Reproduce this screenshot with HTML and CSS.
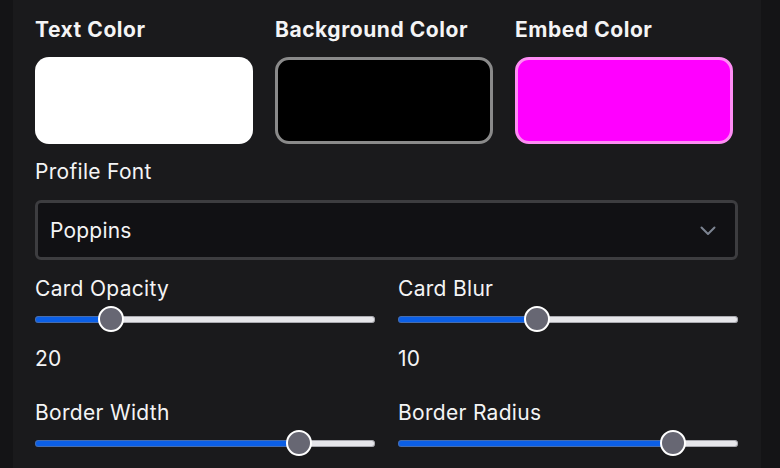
FILE: index.html
```html
<!DOCTYPE html>
<html lang="en">
<head>
<meta charset="utf-8">
<title>Profile Appearance</title>
<link rel="stylesheet" href="styles.css">
</head>
<body>
<div class="panel">
  <div class="colors">
    <div class="color-field">
      <div class="label-bold">Text Color</div>
      <div class="swatch swatch-white"></div>
    </div>
    <div class="color-field">
      <div class="label-bold">Background Color</div>
      <div class="swatch swatch-black"></div>
    </div>
    <div class="color-field">
      <div class="label-bold">Embed Color</div>
      <div class="swatch swatch-pink"></div>
    </div>
  </div>

  <div class="field">
    <div class="label">Profile Font</div>
    <div class="select">
      <span>Poppins</span>
      <svg class="chevron" width="16" height="10" viewBox="0 0 16 10"><polyline points="1.5,1.5 8,8 14.5,1.5" fill="none" stroke="#7c8492" stroke-width="2" stroke-linecap="round" stroke-linejoin="round"/></svg>
    </div>
  </div>

  <div class="sliders">
    <div class="slider-field">
      <div class="label">Card Opacity</div>
      <input class="range" type="range" min="0" max="100" value="20" style="--v:0.2">
      <div class="value">20</div>
    </div>
    <div class="slider-field">
      <div class="label">Card Blur</div>
      <input class="range" type="range" min="0" max="25" value="10" style="--v:0.4">
      <div class="value">10</div>
    </div>
    <div class="slider-field">
      <div class="label">Border Width</div>
      <input class="range" type="range" min="0" max="10" value="8" style="--v:0.8">
    </div>
    <div class="slider-field">
      <div class="label">Border Radius</div>
      <input class="range" type="range" min="0" max="30" value="25" style="--v:0.8333">
    </div>
  </div>
</div>
</body>
</html>
```

FILE: styles.css
```css
* { box-sizing: border-box; }

html, body {
  margin: 0;
  padding: 0;
  background: #141416;
  height: 100%;
  overflow: hidden;
}

body {
  font-family: Inter, "Liberation Sans", sans-serif;
  color: #f4f4f5;
}

.panel {
  margin: 0 19px 0 13px;
  background: #1a1a1c;
  min-height: 100%;
  padding: 18px 23px 0 22px;
}

.colors {
  display: flex;
  gap: 22px;
}

.color-field {
  width: 218px;
  display: flex;
  flex-direction: column;
  gap: 15px;
}

.label-bold {
  font-size: 21px;
  line-height: 24px;
  font-weight: 700;
  letter-spacing: 0.55px;
  color: #f4f4f5;
  white-space: nowrap;
}

.label {
  font-size: 21px;
  line-height: 24px;
  font-weight: 400;
  letter-spacing: 0.3px;
  color: #f4f4f5;
  white-space: nowrap;
}

.swatch {
  height: 87px;
  border-radius: 14px;
}

.swatch-white { background: #ffffff; }
.swatch-black { background: #000000; border: 3px solid #8a8a8a; }
.swatch-pink { background: #ff00ff; border: 3px solid #ff8cf5; }

.field {
  margin-top: 16px;
  display: flex;
  flex-direction: column;
  gap: 16px;
}

.select {
  height: 60px;
  background: #111114;
  border: 3px solid #3d3d40;
  border-radius: 6px;
  display: flex;
  align-items: center;
  justify-content: space-between;
  padding: 0 19px 0 12px;
  font-size: 21px;
  letter-spacing: 0.2px;
  color: #f4f4f5;
}

.chevron { display: block; margin-top: 1px; }

.sliders {
  margin-top: 17px;
  display: grid;
  grid-template-columns: 340px 340px;
  column-gap: 23px;
  row-gap: 30px;
}

.slider-field {
  display: flex;
  flex-direction: column;
}

.value {
  margin-top: 15px;
  font-size: 21px;
  line-height: 24px;
  letter-spacing: 0.3px;
}

.range {
  -webkit-appearance: none;
  appearance: none;
  width: 100%;
  height: 26px;
  margin: 5px 0 0;
  padding: 0;
  background: transparent;
  --fill: calc(13px + (100% - 26px) * var(--v));
}

.range::-webkit-slider-runnable-track {
  height: 7px;
  border-radius: 4px;
  background: linear-gradient(to right, #0b5fe6 0, #0b5fe6 var(--fill), #e6e6ea var(--fill), #e6e6ea 100%);
  box-shadow: inset 0 0 0 1px rgba(120, 120, 128, 0.55);
}

.range::-webkit-slider-thumb {
  -webkit-appearance: none;
  appearance: none;
  width: 26px;
  height: 26px;
  margin-top: -9.5px;
  border-radius: 50%;
  background: #676773;
  border: 2.5px solid #ffffff;
}
```
